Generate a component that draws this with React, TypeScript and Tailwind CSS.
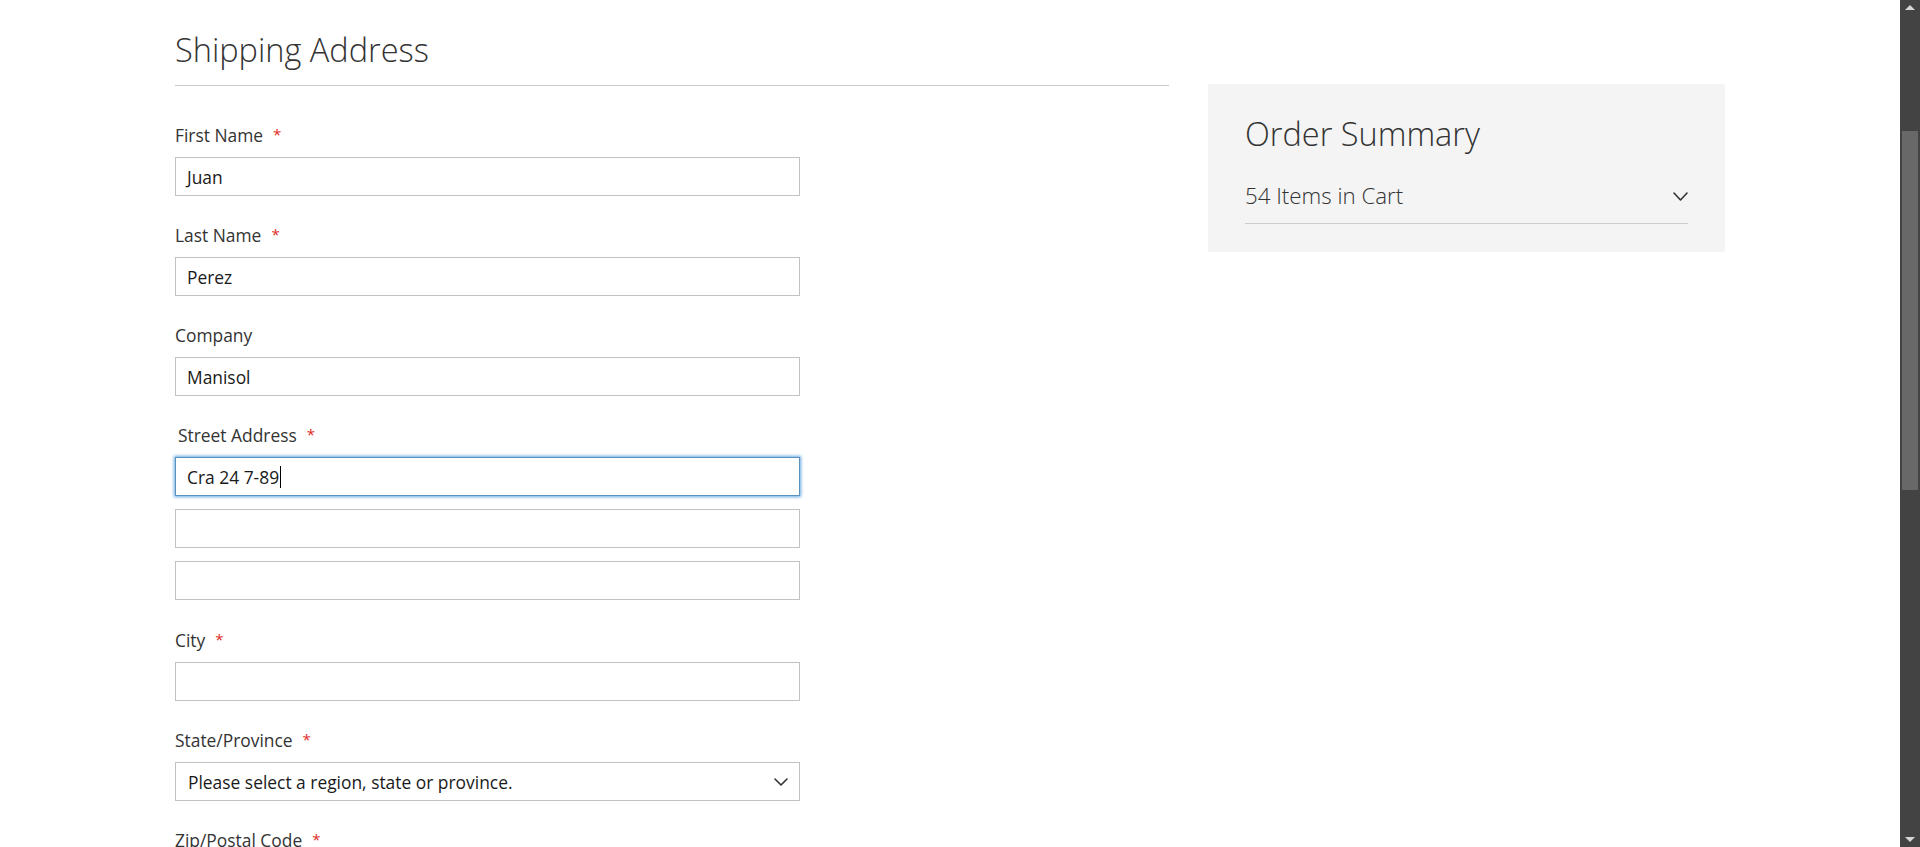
import React from 'react'

type FieldProps = {
  label: string
  required?: boolean
  value?: string
  legend?: boolean
}

function Label({ label, required, legend }: { label: string; required?: boolean; legend?: boolean }) {
  return (
    <div className={`flex h-[24px] items-start leading-[24px] text-[17.4px] text-[#333] ${legend ? 'pl-[3px]' : ''}`}>
      <span>{label}</span>
      {required && <span className="ml-[10px] text-[15px] leading-[22px] text-[#e02b27]">*</span>}
    </div>
  )
}

function TextBox({ value, focused }: { value?: string; focused?: boolean }) {
  return (
    <div
      className={`flex h-[39px] w-[625px] items-center bg-white px-[11px] pt-[1px] text-[17.4px] text-[#1a1a1a] ${
        focused
          ? 'border border-[#5b91bd] shadow-[0_0_3px_1px_#68a8e0]'
          : 'border border-[#c2c2c2]'
      }`}
    >
      <span className="whitespace-pre">{value}</span>
      {focused && <span className="ml-[1px] h-[22px] w-[1px] bg-black" />}
    </div>
  )
}

function Field({ label, required, value }: FieldProps) {
  return (
    <div className="mb-[27px]">
      <Label label={label} required={required} />
      <div className="mt-[10px]">
        <TextBox value={value} />
      </div>
    </div>
  )
}

function Chevron({ w, h }: { w: number; h: number }) {
  return (
    <svg width={w} height={h} viewBox={`0 0 ${w} ${h}`} fill="none">
      <path d={`M1 1 L${w / 2} ${h - 1} L${w - 1} 1`} stroke="#333" strokeWidth="1.6" strokeLinecap="round" strokeLinejoin="round" />
    </svg>
  )
}

function Scrollbar() {
  return (
    <div className="flex h-full w-[20px] flex-shrink-0 flex-col bg-[#434343]">
      <div className="flex h-[20px] items-start justify-center pt-[5px]">
        <svg width="10" height="5" viewBox="0 0 10 5">
          <polygon points="0,5 5,0 10,5" fill="#d6d6d6" />
        </svg>
      </div>
      <div className="mx-[2px] mt-[111px] h-[359px] bg-[#686868]" />
      <div className="flex-1" />
      <div className="flex h-[20px] items-end justify-center pb-[5px]">
        <svg width="10" height="5" viewBox="0 0 10 5">
          <polygon points="0,0 10,0 5,5" fill="#d6d6d6" />
        </svg>
      </div>
    </div>
  )
}

export default function App() {
  return (
    <div className="flex h-[847px] w-full overflow-hidden bg-white font-['Open_Sans',sans-serif]">
      <div className="flex flex-1 items-start pl-[175px]">
        {/* форма адреса доставки */}
        <div className="w-[994px] flex-shrink-0 pt-[30px]">
          <h2 className="border-b border-[#cccccc] pb-[15px] text-[32.5px] font-light leading-[40px] text-[#333]">
            Shipping Address
          </h2>
          <div className="pt-[37px]">
            <Field label="First Name" required value="Juan" />
            <Field label="Last Name" required value="Perez" />
            <Field label="Company" value="Manisol" />

            <div className="mb-[28px]">
              <Label label="Street Address" required legend />
              <div className="mt-[10px] flex flex-col gap-[13px]">
                <TextBox value="Cra 24 7-89" focused />
                <TextBox />
                <TextBox />
              </div>
            </div>

            <Field label="City" required />

            <div className="mb-[27px]">
              <Label label="State/Province" required />
              <div className="mt-[10px] flex h-[39px] w-[625px] items-center justify-between border border-[#c2c2c2] bg-white pl-[12px] pr-[11px] pt-[1px] text-[17.4px] text-[#1a1a1a]">
                <span>Please select a region, state or province.</span>
                <Chevron w={14} h={8} />
              </div>
            </div>

            <Label label="Zip/Postal Code" required />
          </div>
        </div>

        {/* сводка заказа */}
        <div className="ml-[39px] mt-[84px] w-[517px] flex-shrink-0 bg-[#f4f4f4] px-[37px] pb-[28px] pt-[30px]">
          <h3 className="text-[32.5px] font-light leading-[40px] text-[#333]">Order Summary</h3>
          <div className="mt-[27px] flex items-center justify-between border-b border-[#cccccc] pb-[12px]">
            <span className="text-[22.3px] font-light leading-[30px] text-[#333]">54 Items in Cart</span>
            <Chevron w={15} h={9} />
          </div>
        </div>
      </div>
      <Scrollbar />
    </div>
  )
}
